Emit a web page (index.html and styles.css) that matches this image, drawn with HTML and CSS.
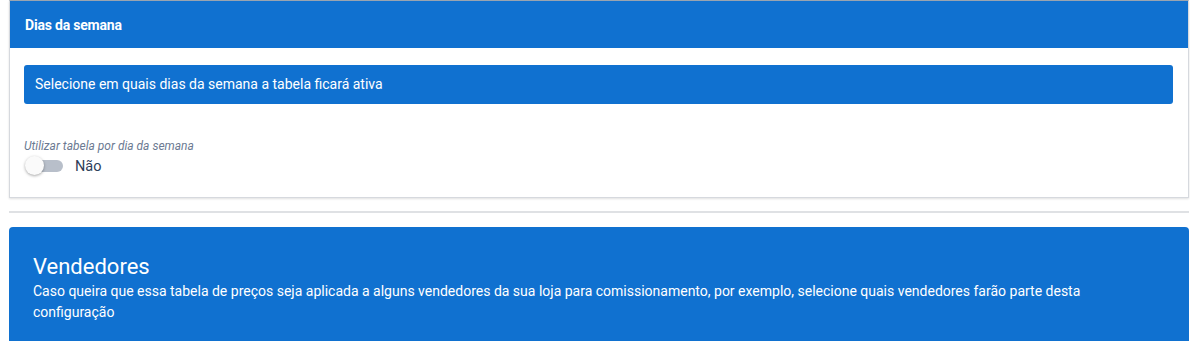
FILE: index.html
```html
<!DOCTYPE html>
<html lang="pt-br">
<head>
  <meta charset="utf-8">
  <title>Tabela de preços - Configuração</title>
  <meta name="viewport" content="width=device-width, initial-scale=1.0">
  <link rel="stylesheet" href="styles.css">
</head>
<body>
  <div class="page">
    <div class="card">
      <div class="card-header">Dias da semana</div>
      <div class="card-body">
        <div class="info-bar">Selecione em quais dias da semana a tabela ficará ativa</div>

        <label class="field-label">Utilizar tabela por dia da semana</label>
        <div class="switch-row">
          <span class="switch">
            <span class="switch-track"></span>
            <span class="switch-knob"></span>
          </span>
          <span class="switch-text">Não</span>
        </div>
      </div>
    </div>

    <hr class="divider">

    <div class="section-banner">
      <h2>Vendedores</h2>
      <p>Caso queira que essa tabela de preços seja aplicada a alguns vendedores da sua loja para comissionamento, por exemplo, selecione quais vendedores farão parte desta configuração</p>
    </div>
  </div>
</body>
</html>
```

FILE: styles.css
```css
* {
  box-sizing: border-box;
}

body {
  margin: 0;
  background-color: #fff;
  font-family: Roboto, "Liberation Sans", Arial, sans-serif;
  color: #2d3e5a;
}

.page {
  padding: 0 1px 0 9px;
}

.card {
  background-color: #fff;
  border: 1px solid #d6d9de;
  border-top-color: #9aa4b0;
  box-shadow: 0 1px 2px rgba(0, 0, 0, 0.12);
}

.card-header {
  background-color: #1071d0;
  color: #fff;
  font-size: 14px;
  font-weight: bold;
  letter-spacing: -0.2px;
  height: 47px;
  padding: 16px 15px 0;
}

.card-body {
  padding: 17px 15px 21px 14px;
}

.info-bar {
  background-color: #1071d0;
  color: #fff;
  font-size: 14px;
  border-radius: 3px;
  height: 39px;
  padding: 11px 11px 0;
}

.field-label {
  display: block;
  margin-top: 35px;
  font-size: 12px;
  font-style: italic;
  color: #6b7a92;
}

.switch-row {
  display: flex;
  align-items: center;
  gap: 12px;
  margin-top: 3px;
}

.switch {
  position: relative;
  display: inline-block;
  width: 39px;
  height: 20px;
}

.switch-track {
  position: absolute;
  left: 8px;
  right: 0;
  top: 4px;
  height: 12px;
  border-radius: 6px;
  background-color: #b8bfca;
}

.switch-knob {
  position: absolute;
  left: 1px;
  top: 0;
  width: 19px;
  height: 19px;
  border-radius: 50%;
  background-color: #fafafa;
  box-shadow: 0 1px 3px rgba(0, 0, 0, 0.35);
}

.switch-text {
  font-size: 14.5px;
  color: #2d3e5a;
}

.divider {
  margin: 13px 0 14px;
  border: none;
  border-top: 2px solid #dfe1e4;
}

.section-banner {
  background-color: #1071d0;
  color: #fff;
  border-radius: 4px 4px 0 0;
  padding: 27px 24px 20px;
  min-height: 114px;
}

.section-banner h2 {
  margin: 0;
  font-size: 22px;
  font-weight: normal;
  line-height: 26px;
}

.section-banner p {
  margin: 1px 0 0;
  font-size: 14px;
  line-height: 21px;
  max-width: 1080px;
}
```
